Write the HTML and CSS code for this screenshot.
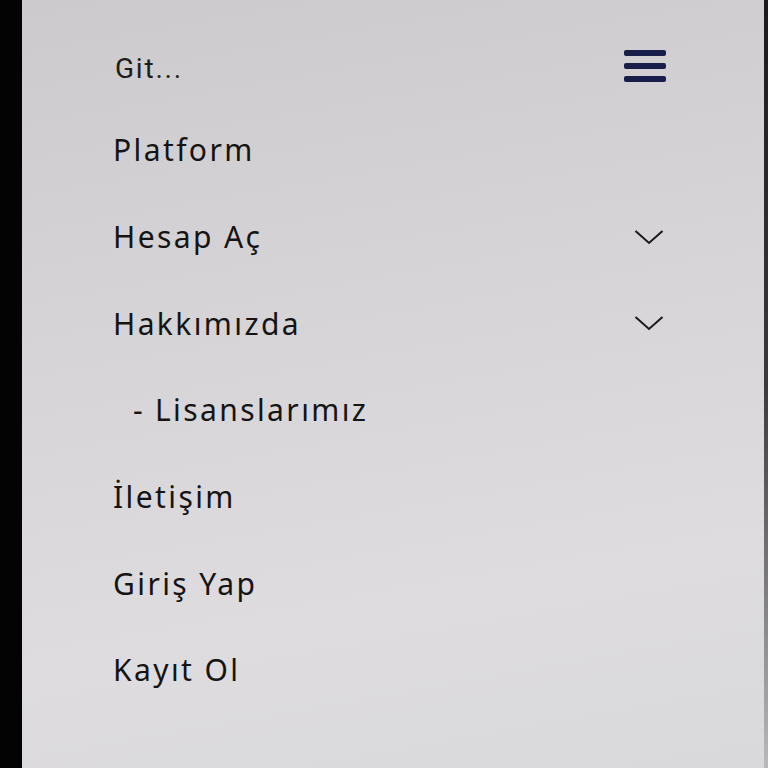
FILE: index.html
```html
<!DOCTYPE html>
<html lang="tr">
<head>
<meta charset="utf-8">
<title>Menü</title>
<link rel="stylesheet" href="styles.css">
</head>
<body>
<div class="screen">
  <div class="bezel-left"></div>
  <div class="panel">
    <div class="menu-head">
      <span class="goto">Git...</span>
      <span class="burger"><i></i><i></i><i></i></span>
    </div>
    <ul class="menu">
      <li class="item"><span>Platform</span></li>
      <li class="item"><span>Hesap Aç</span>
        <svg class="chev" viewBox="0 0 30 16"><path d="M1.5 2 L15 14 L28.5 2" fill="none" stroke="#1a1a1a" stroke-width="2"/></svg>
      </li>
      <li class="item"><span>Hakkımızda</span>
        <svg class="chev" viewBox="0 0 30 16"><path d="M1.5 2 L15 14 L28.5 2" fill="none" stroke="#1a1a1a" stroke-width="2"/></svg>
      </li>
      <li class="item sub"><span><span class="dash">-</span>Lisanslarımız</span></li>
      <li class="item"><span>İletişim</span></li>
      <li class="item"><span>Giriş Yap</span></li>
      <li class="item"><span>Kayıt Ol</span></li>
    </ul>
  </div>
  <div class="bezel-right"></div>
</div>
</body>
</html>
```

FILE: styles.css
```css
html, body {
  margin: 0;
  padding: 0;
  background: #050505;
  width: 768px;
  height: 768px;
  overflow: hidden;
}
.screen {
  display: flex;
  width: 768px;
  height: 768px;
}
.bezel-left {
  width: 22px;
  flex: none;
  background: #030303;
}
.bezel-right {
  width: 4px;
  flex: none;
  background: linear-gradient(180deg, #1b1b1e 0%, #3a3a3e 50%, #b9b8bb 100%);
}
.panel {
  flex: 1;
  padding: 23px 98px 0 91px;
  background: linear-gradient(170deg, #cdcacd 0%, #d6d4d7 40%, #dedcdf 75%, #d9d8db 100%);
  color: #141414;
  font-family: "Noto Sans", "Open Sans", sans-serif;
}
.menu-head {
  height: 86px;
  display: flex;
  align-items: center;
  justify-content: space-between;
}
.goto {
  font-family: Roboto, "Liberation Sans", sans-serif;
  font-size: 28px;
  color: #1c1c1c;
  letter-spacing: 1.8px;
  padding: 4px 0 0 2px;
}
.burger {
  display: flex;
  flex-direction: column;
  gap: 7px;
  width: 42px;
}
.burger i {
  display: block;
  height: 6px;
  border-radius: 2px;
  background: #191d4a;
}
.menu {
  list-style: none;
  margin: 0;
  padding: 0;
}
.item {
  box-sizing: border-box;
  height: 86.7px;
  padding-bottom: 5px;
  display: flex;
  align-items: center;
  justify-content: space-between;
  font-size: 30px;
  letter-spacing: 2.4px;
}
.item.sub {
  padding-left: 20px;
}
.dash {
  display: inline-block;
  width: 22px;
}
.chev {
  width: 30px;
  height: 16px;
  margin-right: 2px;
}
```
